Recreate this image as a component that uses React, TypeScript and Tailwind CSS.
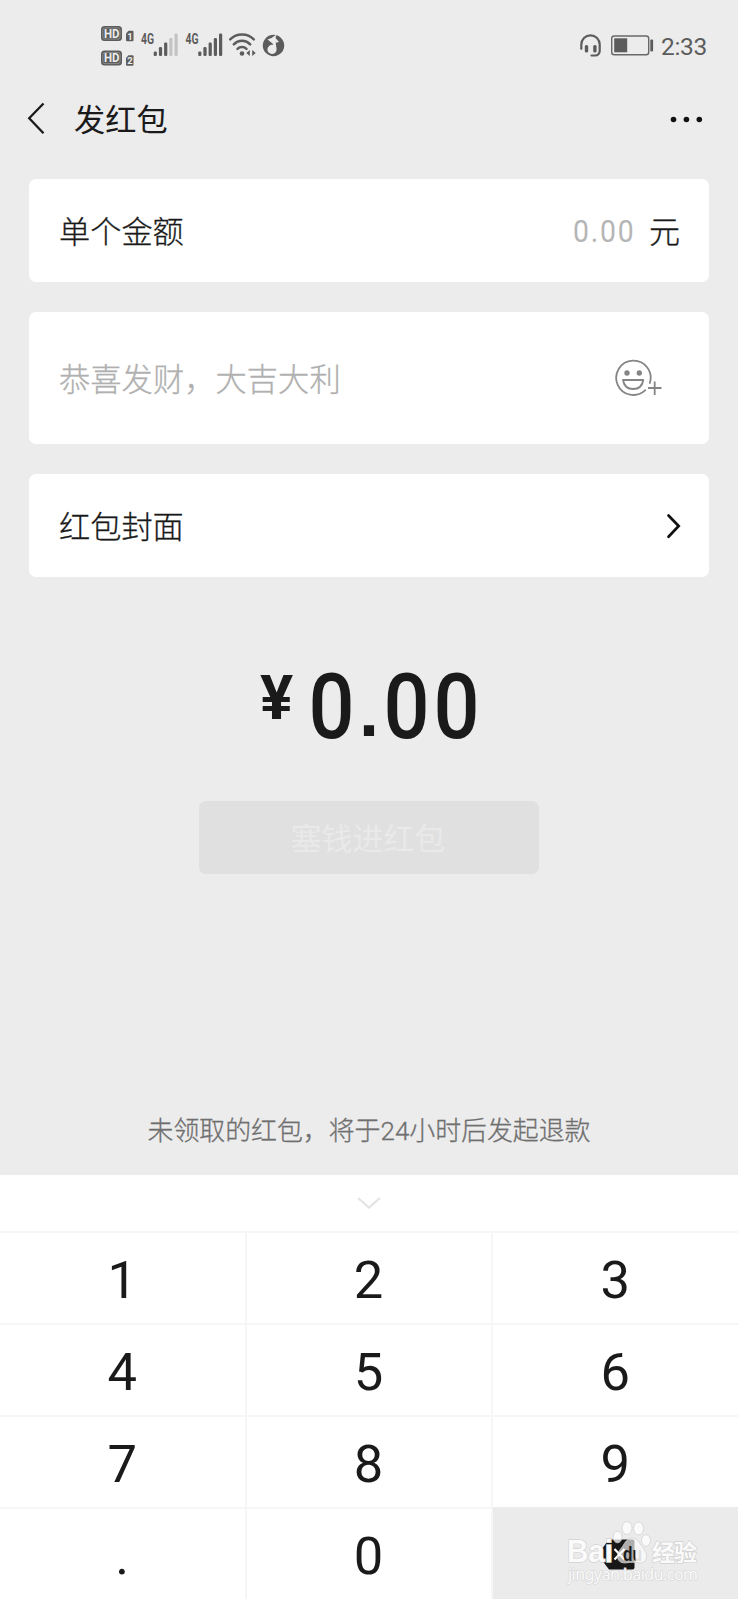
import type { ReactNode } from "react";

const cjk = "font-['Roboto','Noto_Sans_CJK_SC',sans-serif]";

function SignalBars({ x, active }: { x: number; active: number }) {
  const tops = [51.5, 47, 42.5, 38, 33.5];
  return (
    <g>
      {tops.map((top, i) => (
        <rect key={i} x={x + i * 5.2} y={top} width="3.2" height={56 - top} rx="1.2" fill={i < active ? "#5c5c5c" : "#c3c3c3"} />
      ))}
    </g>
  );
}

function HdBadge({ y, sim }: { y: number; sim: string }) {
  return (
    <g>
      <rect x="101" y={y} width="21" height="15" rx="3.5" fill="#5c5c5c" />
      <rect x="102.900" y={y + 1.9} width="17.200" height="11.200" rx="2" fill="none" stroke="#9d9d9d" strokeWidth="0.700" />
      <text x="104" y={y + 11.8} fontSize="12.5" fontWeight="700" fill="#ececec" textLength="15.5" lengthAdjust="spacingAndGlyphs">HD</text>
      <path d={`M126 ${y + 7.500}l2.500-2.800h4a1 1 0 0 1 1 1v8.500a1 1 0 0 1-1 1h-5.500a1 1 0 0 1-1-1z`} fill="#5c5c5c" />
      <text x="127.300" y={y + 13.5} fontSize="9.500" fontWeight="700" fill="#ececec">{sim}</text>
    </g>
  );
}

function StatusBar() {
  return (
    <header className="flex h-[90px] shrink-0 items-start justify-between pl-[95px] pr-[31px]">
      <svg viewBox="95 0 195 90" className="h-[90px] w-[195px] font-['Roboto']">
        <HdBadge y={26} sim="1" />
        <HdBadge y={50.500} sim="2" />
        <text x="141" y="43.800" fontSize="14" fontWeight="700" fill="#5c5c5c" textLength="13" lengthAdjust="spacingAndGlyphs">4G</text>
        <SignalBars x={153.700} active={3} />
        <text x="185.500" y="43.800" fontSize="14" fontWeight="700" fill="#5c5c5c" textLength="13" lengthAdjust="spacingAndGlyphs">4G</text>
        <SignalBars x={198.200} active={5} />
        <g fill="none" stroke="#5c5c5c" strokeWidth="2.500" strokeLinecap="round">
          <path d="M230.200 39.300a17 17 0 0 1 23.600 0" />
          <path d="M233.800 44.300a11.500 11.500 0 0 1 16.400 0" />
          <path d="M237.500 48.800a6.500 6.500 0 0 1 9 0" />
        </g>
        <circle cx="242" cy="53.500" r="2.300" fill="#5c5c5c" />
        <path d="M246.300 53l3.500-3v6zM255.700 53l-3.500-3v6z" fill="#5c5c5c" />
        <circle cx="273.500" cy="45.500" r="10.700" fill="#5c5c5c" />
        <path d="M276.500 34.500l-1 3.500 3.500 4-3.300.8.800 5.700a4.600 4.600 0 1 1-3.300-3.500l-.7-1.500-5-4 4-1.500z" fill="#ececec" />
      </svg>
      <div className="flex h-[90px] items-center gap-[6px]">
        <svg viewBox="579 0 76 90" className="h-[90px] w-[76px]">
          <path d="M581.300 48.800V44.500a9.200 9.200 0 0 1 18.400 0v6.500a4.500 4.500 0 0 1-4.500 4.500h-3.700" fill="none" stroke="#5c5c5c" strokeWidth="2.200" strokeLinecap="round" />
          <rect x="584.800" y="45" width="3.400" height="7.500" rx="1.500" fill="#5c5c5c" />
          <rect x="593.200" y="45" width="3.400" height="7.500" rx="1.500" fill="#5c5c5c" />
          <rect x="611.700" y="36" width="37" height="18.700" rx="2.500" fill="none" stroke="#686868" strokeWidth="1.400" />
          <rect x="614.200" y="38.300" width="13" height="14" fill="#5c5c5c" />
          <rect x="650.300" y="39.500" width="2.800" height="12" rx="1" fill="#5c5c5c" />
        </svg>
        <span className="w-[46px] whitespace-nowrap pt-[3px] text-[24.500px] leading-[90px] tracking-[-0.3px] text-[#5c5c5c]">2:33</span>
      </div>
    </header>
  );
}

function TitleBar() {
  return (
    <div className="flex h-[89px] shrink-0 items-start justify-between pl-[26px] pr-[33px]">
      <div className="flex h-[58px] items-center gap-[28px]">
        <svg viewBox="0 0 20 34" className="h-[34px] w-5">
          <path d="M17.500 1.500L3.200 16.300l14.300 14.900" fill="none" stroke="#1a1a1a" strokeWidth="2.300" />
        </svg>
        <h1 className="pt-1 text-[31.200px] font-normal leading-[58px] text-[#1a1a1a]">发红包</h1>
      </div>
      <svg viewBox="0 0 36 58" className="h-[58px] w-9">
        <g fill="#111">
          <circle cx="4.500" cy="29.500" r="2.800" />
          <circle cx="17.400" cy="29.500" r="2.800" />
          <circle cx="30.300" cy="29.500" r="2.800" />
        </g>
      </svg>
    </div>
  );
}

function Card({ className, children }: { className: string; children: ReactNode }) {
  return <div className={`flex items-center justify-between rounded-[7px] bg-white pl-[30px] ${className}`}>{children}</div>;
}

function Key({ label, className }: { label: string; className: string }) {
  return (
    <button className={`flex items-center justify-center border-t-2 border-[#f6f6f6] text-[52.500px] leading-none text-[#1a1a1a] ${className}`}>
      <span className="pt-[5px]">{label}</span>
    </button>
  );
}

function Watermark() {
  return (
    <svg viewBox="560 1515 145 70" className="absolute left-[68px] top-[7px] h-[70px] w-[145px] font-['Liberation_Sans','Noto_Sans_CJK_SC',sans-serif]">
      <g fill="#fff" fillOpacity="0.75" stroke="#d2d2d2" strokeWidth="0.800">
        <ellipse cx="616.500" cy="1536" rx="4.500" ry="5.800" />
        <ellipse cx="626" cy="1527" rx="5" ry="6.500" />
        <ellipse cx="637.500" cy="1527.500" rx="5" ry="6.500" />
        <ellipse cx="645" cy="1539.500" rx="4.500" ry="5.800" />
        <path d="M631 1537c4.500 0 7.500 4.500 10 8.500s5.500 7 4.500 11.500c-1.200 5-6 5.300-9 4.800-4-.7-7-.7-11 0-4 .6-8.500-.8-9-5.800-.4-4.500 2.500-7 5-10.500 2.500-4 5-8.500 9.500-8.500z" fillOpacity="0.650" />
      </g>
      <g fill="#fafafa" stroke="#d2d2d2" strokeWidth="1.400" paintOrder="stroke">
        <text x="566" y="1561" fontSize="31" fontWeight="700" textLength="46" lengthAdjust="spacingAndGlyphs">Bai</text>
        <text x="651" y="1560" fontSize="23" fontWeight="700" textLength="45">经验</text>
        <text x="567" y="1579" fontSize="16" strokeWidth="1" textLength="130" className="font-['Noto_Sans']">jingyan.baidu.com</text>
      </g>
      <text x="622" y="1559.500" fontSize="20" fontWeight="700" fill="#1a1a1a" textLength="19" lengthAdjust="spacingAndGlyphs">du</text>
      <path d="M634.500 1545h6.500v15h-6.500z" fill="#f4f4f4" fillOpacity="0.900" />
    </svg>
  );
}

function DeleteKey() {
  return (
    <button className="relative border-t-2 border-[#ececec] bg-[#ebebeb]">
      <svg viewBox="492 1508 246 90" className="absolute left-0 top-0 h-[90px] w-[246px]">
        <path d="M608 1538.500h23.500a2 2 0 0 1 2 2v26a2 2 0 0 1-2 2H608l-9.500-12.500v-5z" fill="#181818" />
        <path d="M613.500 1548l10 10.500M623.500 1548l-10 10.500" stroke="#fff" strokeWidth="2.200" />
      </svg>
      <Watermark />
    </button>
  );
}

const rows = [["1", "2", "3"], ["4", "5", "6"], ["7", "8", "9"], [".", "0", "del"]];

export default function App() {
  return (
    <div className={`flex h-[1600px] w-[738px] flex-col overflow-hidden bg-[#ececec] ${cjk}`}>
      <StatusBar />
      <TitleBar />

      <section className="flex flex-col gap-[30px] px-[29px]">
        <Card className="h-[103px] pr-[29px]">
          <span className="pt-[6px] text-[31.200px] font-light text-[#1a1a1a] [-webkit-text-stroke:0.300px_#1a1a1a]">单个金额</span>
          <div className="flex items-center">
            <span className="origin-right scale-x-[0.900] pt-[2px] text-[31.500px] leading-none tracking-[2px] text-[#b5b5b5]">0.00</span>
            <span className="pl-[14px] pt-[6px] text-[31px] font-light text-[#1a1a1a] [-webkit-text-stroke:0.300px_#1a1a1a]">元</span>
          </div>
        </Card>
        <Card className="h-[132px] pr-[45px]">
          <span className="pt-[6px] text-[31.300px] font-light text-[#b0b0b0] [-webkit-text-stroke:0.300px_#b0b0b0]">恭喜发财，大吉大利</span>
          <svg viewBox="614 357.500 50 40" className="h-10 w-[50px]" fill="none" stroke="#858585" strokeWidth="1.800">
            <path d="M649.800 382.500a17.200 17.200 0 1 0-4.500 7.200" strokeLinecap="round" />
            <circle cx="627" cy="372.500" r="2.700" fill="#858585" stroke="none" />
            <circle cx="639.300" cy="372.500" r="2.700" fill="#858585" stroke="none" />
            <path d="M623 379.500h20.300c-1 6-5 9-10.150 9s-9.150-3-10.150-9z" strokeLinejoin="round" />
            <path d="M648 387.500h13.500M654.700 381v13.500" />
          </svg>
        </Card>
        <Card className="h-[103px] pr-[27px]">
          <span className="pt-[6px] text-[31.200px] font-light text-[#1a1a1a] [-webkit-text-stroke:0.300px_#1a1a1a]">红包封面</span>
          <svg viewBox="0 0 16 28" className="h-7 w-4">
            <path d="M2.500 3.500L12.700 14 2.500 24.700" fill="none" stroke="#111" strokeWidth="2.700" strokeLinecap="round" />
          </svg>
        </Card>
      </section>

      <div className="flex h-[224px] items-start justify-center pt-[85px] text-[#1a1a1a]">
        <span className="mr-[13px] text-[62px] font-bold leading-[72px]">¥</span>
        <div className="-mr-[3px] flex text-center text-[90px] font-medium leading-[91px]">
          <span className="w-[51px] scale-x-[0.900]">0</span>
          <span className="w-[24px] font-['Liberation_Sans'] text-[72px] font-bold leading-[99px]">.</span>
          <span className="w-[50px] scale-x-[0.900]">0</span>
          <span className="w-[50px] scale-x-[0.900]">0</span>
        </div>
      </div>

      <button className="mx-auto h-[73px] w-[340px] shrink-0 rounded-[7px] bg-[#e0e0e0] pr-[2px] pt-[6px] text-[31px] text-[#e9e9e9]">塞钱进红包</button>

      <p className="mt-auto pb-[25px] text-center text-[25.900px] font-light leading-[38px] text-[#6f6f6f] [-webkit-text-stroke:0.300px_#6f6f6f]">
        未领取的红包，将于24小时后发起退款
      </p>

      <section className="flex h-[425px] shrink-0 flex-col bg-white">
        <div className="flex h-14 items-center justify-center">
          <svg viewBox="0 0 26 14" className="h-[14px] w-[26px]">
            <path d="M2 2l11 9.500L24 2" fill="none" stroke="#e3e3e3" strokeWidth="2.200" />
          </svg>
        </div>
        <div className="grid h-[368px] grid-cols-[246.500px_246px_245.500px] grid-rows-4">
          {rows.flatMap((row) =>
            row.map((label, i) =>
              label === "del" ? <DeleteKey key={label} /> : <Key key={label} label={label} className={i < 2 ? "border-r-2" : ""} />
            )
          )}
        </div>
      </section>
    </div>
  );
}
